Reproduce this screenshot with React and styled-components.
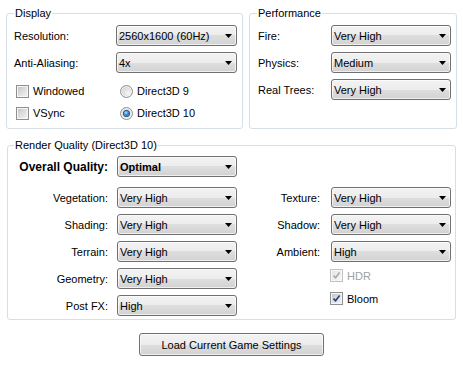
import React from 'react';
import styled, { createGlobalStyle } from 'styled-components';

const GlobalStyle = createGlobalStyle`
  html, body { margin: 0; padding: 0; background: #ffffff; }
  body {
    font-family: "Liberation Sans", Arial, sans-serif;
    font-size: 11px;
    color: #000;
  }
`;

const Page = styled.div`
  width: 451px;
  padding: 6px 0 0 6px;
  display: flex;
  flex-direction: column;
`;

const TopRow = styled.div`
  display: flex;
  gap: 6px;
  align-items: stretch;
`;

const Group = styled.fieldset`
  margin: 0 0 0 ${p => p.$offset || 0}px;
  box-sizing: border-box;
  width: ${p => p.$width}px;
  min-width: 0;
  border: 1px solid #d5dfe5;
  border-radius: 3px;
  padding: ${p => p.$pad};
`;

const RenderGroup = styled(Group)`
  margin-top: 9px;
`;

const Legend = styled.legend`
  padding: 0 1px;
  margin-left: ${p => p.$indent || 0}px;
  font-size: 11px;
  line-height: 14px;
  color: #000;
`;

const FormGrid = styled.div`
  display: grid;
  grid-template-columns: ${p => p.$labelW}px ${p => p.$comboW}px;
  grid-auto-rows: 21px;
  row-gap: 6px;
  align-items: center;
`;

const OptionGrid = styled.div`
  display: grid;
  grid-template-columns: 102px 121px;
  grid-auto-rows: 22px;
  align-items: center;
  margin-top: 7px;
`;

const Label = styled.span`
  white-space: nowrap;
  text-align: ${p => (p.$right ? 'right' : 'left')};
  padding-right: ${p => p.$gap || 0}px;
`;

const BoldLabel = styled(Label)`
  font-size: 12px;
  font-weight: 700;
`;

const ComboBox = styled.div`
  box-sizing: border-box;
  height: 21px;
  width: 100%;
  border: 1px solid #707070;
  border-radius: 3px;
  background: linear-gradient(#f3f3f3 0%, #ececec 50%, #dedede 50%, #d2d2d2 100%);
  box-shadow: inset 0 0 0 1px rgba(255, 255, 255, 0.65);
  display: flex;
  align-items: center;
  justify-content: space-between;
  padding: 0 4px 0 2px;
  font-weight: ${p => (p.$bold ? 700 : 400)};
  white-space: nowrap;
`;

const Arrow = styled.svg`
  flex: none;
  width: 7px;
  height: 4px;
`;

const Option = styled.label`
  display: flex;
  align-items: center;
  gap: 4px;
  margin-left: ${p => p.$indent || 0}px;
  color: ${p => (p.$disabled ? '#a0a0a0' : '#000')};
  white-space: nowrap;
`;

const Box = styled.span`
  flex: none;
  box-sizing: border-box;
  width: 13px;
  height: 13px;
  border: 1px solid ${p => (p.$disabled ? '#c2c2c2' : '#8e8f8f')};
  background: ${p =>
    p.$disabled
      ? 'linear-gradient(135deg, #e4e4e4 0%, #f8f8f8 100%)'
      : 'linear-gradient(135deg, #c2c2c2 0%, #dedede 50%, #f6f6f6 100%)'};
  box-shadow: inset 0 0 0 1px #f6f6f6;
  display: flex;
  align-items: center;
  justify-content: center;
`;

const RadioCircle = styled.span`
  flex: none;
  box-sizing: border-box;
  width: 13px;
  height: 13px;
  border-radius: 50%;
  border: 1px solid #8e8f8f;
  background: radial-gradient(circle at 65% 65%, #f6f6f6 0%, #e0e0e0 45%, #c6c6c6 100%);
  box-shadow: inset 0 0 0 1px #f4f4f4;
  display: flex;
  align-items: center;
  justify-content: center;
`;

const RadioDot = styled.span`
  width: 5px;
  height: 5px;
  border-radius: 50%;
  background: radial-gradient(circle at 40% 35%, #a8e4ff 0%, #2c86d8 50%, #0d3f8e 100%);
  box-shadow: 0 0 0 1px #234f85;
`;

const OverallRow = styled.div`
  display: grid;
  grid-template-columns: 109px 120px;
  height: 21px;
  align-items: center;
`;

const Columns = styled.div`
  display: flex;
  margin-top: 10px;
`;

const RightColumn = styled.div`
  display: flex;
  flex-direction: column;
`;

const CheckStack = styled.div`
  display: flex;
  flex-direction: column;
  margin-top: 2px;
`;

const CheckRow = styled.div`
  height: 23px;
  display: flex;
  align-items: center;
  padding-left: ${p => p.$indent}px;
`;

const ButtonRow = styled.div`
  display: flex;
  justify-content: center;
  margin-top: 13px;
`;

const Button = styled.button`
  box-sizing: border-box;
  width: 185px;
  height: 23px;
  border: 1px solid #707070;
  border-radius: 3px;
  background: linear-gradient(#f3f3f3 0%, #ececec 50%, #dedede 50%, #d2d2d2 100%);
  box-shadow: inset 0 0 0 1px rgba(255, 255, 255, 0.65);
  font-family: "Liberation Sans", Arial, sans-serif;
  font-size: 11px;
  color: #000;
  padding: 0;
`;

function Combo({ value, bold }) {
  return (
    <ComboBox $bold={bold}>
      <span>{value}</span>
      <Arrow viewBox="0 0 7 4">
        <path d="M0 0H7L3.5 4Z" fill="#000" />
      </Arrow>
    </ComboBox>
  );
}

function Checkbox({ label, checked, disabled, indent }) {
  return (
    <Option $indent={indent} $disabled={disabled}>
      <Box $disabled={disabled}>
        {checked && (
          <svg width="9" height="9" viewBox="0 0 9 9">
            <path
              d="M1.5 4.6L3.6 6.8L7.6 1.6"
              fill="none"
              stroke={disabled ? '#a9a9a9' : '#1f3f86'}
              strokeWidth="1.6"
            />
          </svg>
        )}
      </Box>
      {label}
    </Option>
  );
}

function Radio({ label, checked, indent }) {
  return (
    <Option $indent={indent}>
      <RadioCircle>{checked && <RadioDot />}</RadioCircle>
      {label}
    </Option>
  );
}

function Rows({ rows, labelW, comboW, gap, right }) {
  return (
    <FormGrid $labelW={labelW} $comboW={comboW}>
      {rows.map(([label, value]) => (
        <React.Fragment key={label}>
          <Label $right={right} $gap={gap}>{label}</Label>
          <Combo value={value} />
        </React.Fragment>
      ))}
    </FormGrid>
  );
}

export default function App() {
  return (
    <>
      <GlobalStyle />
      <Page>
        <TopRow>
          <Group $width={237} $pad="5px 5px 4px 7px">
            <Legend>Display</Legend>
            <Rows
              labelW={102}
              comboW={121}
              rows={[
                ['Resolution:', '2560x1600 (60Hz)'],
                ['Anti-Aliasing:', '4x'],
              ]}
            />
            <OptionGrid>
              <Checkbox label="Windowed" indent={2} />
              <Radio label="Direct3D 9" indent={4} />
              <Checkbox label="VSync" indent={2} />
              <Radio label="Direct3D 10" indent={4} checked />
            </OptionGrid>
          </Group>
          <Group $width={208} $pad="5px 5px 4px 8px">
            <Legend $indent={-1}>Performance</Legend>
            <Rows
              labelW={73}
              comboW={120}
              rows={[
                ['Fire:', 'Very High'],
                ['Physics:', 'Medium'],
                ['Real Trees:', 'Very High'],
              ]}
            />
          </Group>
        </TopRow>

        <RenderGroup $width={449} $offset={1} $pad="4px 4px 3px 0">
          <Legend $indent={6}>Render Quality (Direct3D 10)</Legend>
          <OverallRow>
            <BoldLabel $right $gap={9}>Overall Quality:</BoldLabel>
            <Combo value="Optimal" bold />
          </OverallRow>
          <Columns>
            <Rows
              labelW={109}
              comboW={120}
              gap={9}
              right
              rows={[
                ['Vegetation:', 'Very High'],
                ['Shading:', 'Very High'],
                ['Terrain:', 'Very High'],
                ['Geometry:', 'Very High'],
                ['Post FX:', 'High'],
              ]}
            />
            <RightColumn>
              <Rows
                labelW={94}
                comboW={120}
                gap={11}
                right
                rows={[
                  ['Texture:', 'Very High'],
                  ['Shadow:', 'Very High'],
                  ['Ambient:', 'High'],
                ]}
              />
              <CheckStack>
                <CheckRow $indent={93}>
                  <Checkbox label="HDR" checked disabled />
                </CheckRow>
                <CheckRow $indent={93}>
                  <Checkbox label="Bloom" checked />
                </CheckRow>
              </CheckStack>
            </RightColumn>
          </Columns>
        </RenderGroup>

        <ButtonRow>
          <Button type="button">Load Current Game Settings</Button>
        </ButtonRow>
      </Page>
    </>
  );
}
